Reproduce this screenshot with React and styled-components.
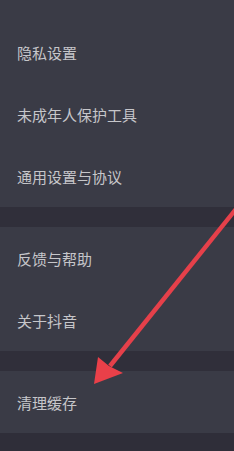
import styled, { createGlobalStyle } from 'styled-components'

const GlobalStyle = createGlobalStyle`
  html, body {
    margin: 0;
    padding: 0;
    background: #2f2e39;
    overflow: hidden;
  }
  body {
    font-family: "Noto Sans CJK SC", "Noto Sans", sans-serif;
  }
`

const Screen = styled.div`
  position: relative;
  width: 234px;
  height: 451px;
  overflow: hidden;
  background: #2f2e39;
`

const List = styled.div`
  display: flex;
  flex-direction: column;
  margin-top: -41px;
`

const Group = styled.div`
  display: flex;
  flex-direction: column;
`

const Gap = styled.div`
  height: 20px;
  background: #302f3a;
`

const Row = styled.div`
  height: 62px;
  display: flex;
  align-items: center;
  padding: 0 17px;
  background: #3a3b46;
  color: #c6c6ca;
  font-size: 15px;
  line-height: 1;
  padding-top: ${({ $shift }) => $shift || 0}px;
  box-sizing: border-box;
`

const Arrow = styled.svg`
  position: absolute;
  left: 0;
  top: 0;
  pointer-events: none;
`

const groups = [
  ['账号与安全', '隐私设置', '未成年人保护工具', '通用设置与协议'],
  ['反馈与帮助', '关于抖音'],
  ['清理缓存'],
]

export default function App() {
  return (
    <>
      <GlobalStyle />
      <Screen>
        <List>
          {groups.map((g, i) => (
            <Group key={i}>
              {i > 0 && <Gap />}
              {g.map(label => (
                <Row key={label} $shift={label === '账号与安全' ? 2 : 0}>{label}</Row>
              ))}
            </Group>
          ))}
        </List>
        <Arrow width="234" height="451" viewBox="0 0 234 451">
          <line x1="240" y1="204" x2="110" y2="366" stroke="#e5404a" strokeWidth="4.5" />
          <polygon points="94,384 98,357 109,366 123,373" fill="#ea4049" />
        </Arrow>
      </Screen>
    </>
  )
}
